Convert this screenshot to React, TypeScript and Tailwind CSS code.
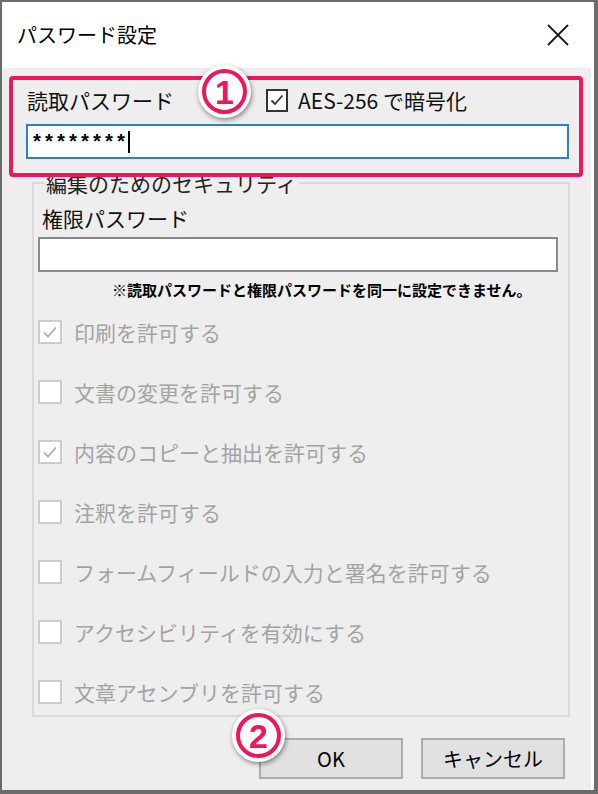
import React from "react";

const FONT = { fontFamily: '"Noto Sans CJK JP", "Noto Sans", sans-serif' };

function DisabledCheck({ checked, label }: { checked?: boolean; label: string }) {
  return (
    <div className="h-[40px] flex items-center">
      <div className="w-[24px] h-[24px] border-2 border-[#cdcdcd] bg-white flex items-center justify-center shrink-0">
        {checked && (
          <svg width="18" height="18" viewBox="0 0 18 18">
            <path d="M3 9.5 L7 13.5 L15 4.5" fill="none" stroke="#a8a8a8" strokeWidth="1.6" />
          </svg>
        )}
      </div>
      <span className="ml-[12px] text-[21px] leading-[26px] text-[#a3a3a3] whitespace-nowrap">{label}</span>
    </div>
  );
}

function Circled({ n, cls }: { n: string; cls: string }) {
  return (
    <div
      className={`absolute ${cls} w-[53px] h-[53px] rounded-full bg-white shadow-[1px_2px_5px_rgba(0,0,0,0.45)] flex items-center justify-center z-20`}
    >
      <div
        className="w-[45px] h-[45px] rounded-full border-[4px] border-[#f0165c] flex items-center justify-center text-[#f0165c] font-black text-[34px] leading-none"
        style={{ fontFamily: '"Liberation Sans", Arial, sans-serif' }}
      >
        {n}
      </div>
    </div>
  );
}

export default function App() {
  return (
    <div className="w-[598px] h-[794px] bg-[#6b6b6b] pl-[2px] pt-[2px] pr-[4px] pb-[4px]" style={FONT}>
      <div className="relative flex flex-col h-full bg-[#eeeeee] border-r-[3px] border-white">
        {/* Title bar */}
        <div className="h-[66px] bg-white flex items-center justify-between pl-[15px] pr-[21px] shrink-0">
          <span className="text-[20px] leading-[26px] text-black">パスワード設定</span>
          <svg width="24" height="24" viewBox="0 0 24 24">
            <path d="M2 2 L22 22 M22 2 L2 22" stroke="#1a1a1a" strokeWidth="1.8" />
          </svg>
        </div>

        {/* Body */}
        <div className="flex flex-col pl-[24px] pr-[22px] pb-[11px] flex-1">
          <div className="mt-[19px] h-[26px] flex items-center">
            <span className="w-[240px] pl-[1px] text-[21px] leading-[26px] text-[#111]">読取パスワード</span>
            <div className="w-[22px] h-[23px] border-2 border-[#333] bg-white flex items-center justify-center">
              <svg width="16" height="16" viewBox="0 0 16 16">
                <path d="M2.5 8.5 L6 12 L13.5 3.5" fill="none" stroke="#333" strokeWidth="1.8" />
              </svg>
            </div>
            <span className="ml-[10px] text-[21px] leading-[26px] text-[#111]">AES-256 で暗号化</span>
          </div>

          <div className="mt-[11px] h-[35px] border-2 border-[#2b7fd4] bg-white flex items-center pl-[3px]">
            <span
              className="text-[20px] font-bold leading-[20px] text-black pt-[4px]"
              style={{ fontFamily: '"Liberation Mono", "Courier New", monospace' }}
            >
              ********
            </span>
            <span className="ml-[1px] w-[2px] h-[22px] bg-black" />
          </div>

          <fieldset className="mt-[12px] ml-[6px] w-[538px] border-2 border-[#d9d9d9] pl-[4px] pr-[10px] pb-[3px]">
            <legend className="ml-[6px] px-[2px] text-[21px] leading-[24px] text-[#222]">編集のためのセキュリティ</legend>
            <div className="mt-[10px] pl-[4px] h-[26px] text-[21px] leading-[26px] text-[#111]">権限パスワード</div>
            <div className="mt-[6px] h-[35px] border-2 border-[#8a8a8a] bg-white" />
            <div className="mt-[8px] pl-[74px] h-[20px] text-[15px] leading-[20px] font-bold text-black whitespace-nowrap">
              ※読取パスワードと権限パスワードを同一に設定できません。
            </div>
            <div className="mt-[12px] flex flex-col gap-[20px]">
              <DisabledCheck checked label="印刷を許可する" />
              <DisabledCheck label="文書の変更を許可する" />
              <DisabledCheck checked label="内容のコピーと抽出を許可する" />
              <DisabledCheck label="注釈を許可する" />
              <DisabledCheck label="フォームフィールドの入力と署名を許可する" />
              <DisabledCheck label="アクセシビリティを有効にする" />
              <DisabledCheck label="文章アセンブリを許可する" />
            </div>
          </fieldset>

          <div className="mt-[21px] flex justify-end gap-[18px] pr-[4px]">
            <button className="w-[144px] h-[41px] bg-[#e1e1e1] border-2 border-[#adadad] text-[20px] leading-none text-black">OK</button>
            <button className="w-[144px] h-[41px] bg-[#e1e1e1] border-2 border-[#adadad] text-[20px] leading-none text-black">キャンセル</button>
          </div>
        </div>

        {/* Annotations */}
        <div className="absolute left-[7px] top-[74px] w-[574px] h-[101px] border-[4px] border-[#f0165c] rounded-[4px] z-10 pointer-events-none" />
        <Circled n="1" cls="left-[196px] top-[63px]" />
        <Circled n="2" cls="left-[230px] top-[707px]" />
      </div>
    </div>
  );
}
